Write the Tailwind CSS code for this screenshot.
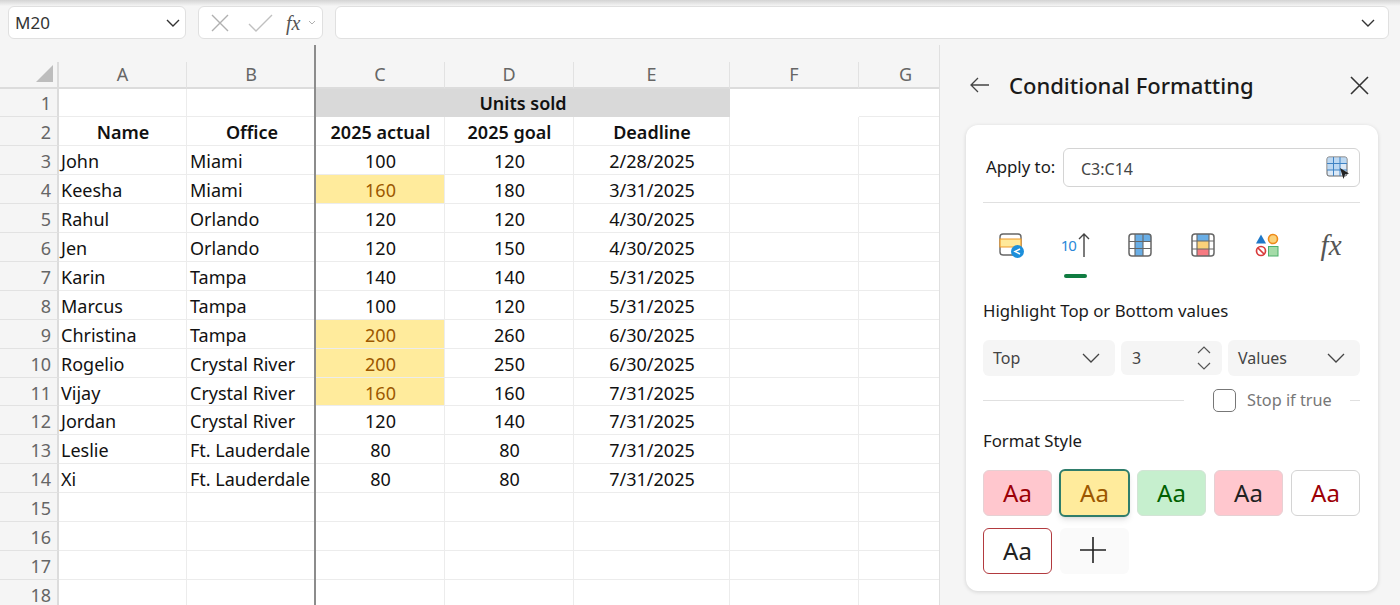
<!DOCTYPE html>
<html lang="en">
<head>
    <meta charset="UTF-8">
    <title>Conditional Formatting</title>
    <script src="https://cdn.jsdelivr.net/npm/@tailwindcss/browser@4"></script>
</head>
<body class="h-[605px] overflow-hidden bg-[#f5f5f5] font-['Noto_Sans',sans-serif] text-[#1a1a1a]">

    <!-- Top shadow -->
    <div class="h-[6px] bg-gradient-to-b from-[#d4d4d4] to-[#f5f5f5]"></div>

    <!-- Formula bar -->
    <div class="flex h-[33px] gap-3 pl-2 pr-[11px]">
        <div class="flex w-[178px] items-center justify-between rounded-md border border-[#e0e0e0] bg-white pl-[6px] pr-[5px] text-[17px] text-[#333]">
            M20
            <svg width="14" height="8" viewBox="0 0 14 8" fill="none" stroke="#333" stroke-width="1.4"><path d="M1 1l6 6 6-6"/></svg>
        </div>
        <div class="flex w-[125px] items-center rounded-md border border-[#e0e0e0] bg-white pl-3">
            <svg width="18" height="18" viewBox="0 0 18 18" fill="none" stroke="#b0b0b0" stroke-width="1.4"><path d="M1 1l16 16M17 1L1 17"/></svg>
            <svg class="ml-[19px]" width="25" height="18" viewBox="0 0 25 18" fill="none" stroke="#c0c0c0" stroke-width="1.4"><path d="M1 10l7 7L24 1"/></svg>
            <span class="ml-[13px] font-['Liberation_Serif',serif] text-[20px] italic leading-none text-[#555]">fx</span>
            <svg class="ml-[8px]" width="8" height="5" viewBox="0 0 8 5" fill="none" stroke="#b0b0b0" stroke-width="1"><path d="M1 1l3 3 3-3"/></svg>
        </div>
        <div class="flex flex-1 items-center justify-end rounded-md border border-[#e0e0e0] bg-white pr-[13px]">
            <svg width="14" height="8" viewBox="0 0 14 8" fill="none" stroke="#333" stroke-width="1.4"><path d="M1 1l6 6 6-6"/></svg>
        </div>
    </div>

    <div class="mt-[6px] flex">
        <!-- Spreadsheet -->
        <div class="relative h-[560px] w-[939px] overflow-hidden pt-[17px]">
            <table class="w-[939px] table-fixed border-separate border-spacing-0 bg-white text-[18px] leading-none text-[#111]">
                <colgroup>
                    <col class="w-[59px]"><col class="w-[128px]"><col class="w-[129px]"><col class="w-[129px]"><col class="w-[129px]"><col class="w-[156px]"><col class="w-[129px]"><col class="w-[80px]">
                </colgroup>
                <thead class="bg-[#f5f5f5] [&_th]:h-[26.5px] [&_th]:border-b-2 [&_th]:border-r [&_th]:border-b-[#dcdcdc] [&_th]:border-r-[#e2e2e2] [&_th]:text-[18px] [&_th]:font-normal [&_th]:text-[#666]">
                    <tr>
                        <th class="border-r-2! border-r-[#dcdcdc]!">
                            <svg class="mb-[2px] ml-[36px]" width="17" height="17" viewBox="0 0 17 17" fill="#bdbdbd"><path d="M17 0v17H0z"/></svg>
                        </th>
                        <th>A</th><th>B</th><th>C</th><th>D</th><th>E</th><th>F</th><th class="border-r-0! pl-[13px]">G</th>
                    </tr>
                </thead>
                <tbody class="[&_td]:h-[28.92px] [&_td]:border-b [&_td]:border-r [&_td]:border-[#ececec] [&_td]:p-0 [&_td]:pl-[2px] [&_td]:pr-[1px] [&_td]:pt-[2px] [&_td:nth-child(3)]:pl-[3px] [&_th]:h-[28.92px] [&_th]:border-b [&_th]:border-r-2 [&_th]:border-b-[#e2e2e2] [&_th]:border-r-[#dcdcdc] [&_th]:bg-[#f5f5f5] [&_th]:pr-[6px] [&_th]:pt-[2px] [&_th]:text-right [&_th]:font-normal [&_th]:text-[#666]">
                    <tr><th>1</th><td></td><td></td><td colspan="3" class="border-[#d9d9d9]! bg-[#d9d9d9] text-center font-semibold">Units sold</td><td class="border-b-white! border-r-white!"></td><td class="border-r-0!"></td></tr>
                    <tr class="text-center font-semibold"><th>2</th><td>Name</td><td>Office</td><td>2025 actual</td><td>2025 goal</td><td>Deadline</td><td></td><td class="border-r-0!"></td></tr>
                    <tr><th>3</th><td>John</td><td>Miami</td><td class="text-center">100</td><td class="text-center">120</td><td class="text-center">2/28/2025</td><td></td><td class="border-r-0!"></td></tr>
                    <tr><th>4</th><td>Keesha</td><td>Miami</td><td class="bg-[#ffeb9c] text-center text-[#9c5700]">160</td><td class="text-center">180</td><td class="text-center">3/31/2025</td><td></td><td class="border-r-0!"></td></tr>
                    <tr><th>5</th><td>Rahul</td><td>Orlando</td><td class="text-center">120</td><td class="text-center">120</td><td class="text-center">4/30/2025</td><td></td><td class="border-r-0!"></td></tr>
                    <tr><th>6</th><td>Jen</td><td>Orlando</td><td class="text-center">120</td><td class="text-center">150</td><td class="text-center">4/30/2025</td><td></td><td class="border-r-0!"></td></tr>
                    <tr><th>7</th><td>Karin</td><td>Tampa</td><td class="text-center">140</td><td class="text-center">140</td><td class="text-center">5/31/2025</td><td></td><td class="border-r-0!"></td></tr>
                    <tr><th>8</th><td>Marcus</td><td>Tampa</td><td class="text-center">100</td><td class="text-center">120</td><td class="text-center">5/31/2025</td><td></td><td class="border-r-0!"></td></tr>
                    <tr><th>9</th><td>Christina</td><td>Tampa</td><td class="bg-[#ffeb9c] text-center text-[#9c5700]">200</td><td class="text-center">260</td><td class="text-center">6/30/2025</td><td></td><td class="border-r-0!"></td></tr>
                    <tr><th>10</th><td>Rogelio</td><td>Crystal River</td><td class="bg-[#ffeb9c] text-center text-[#9c5700]">200</td><td class="text-center">250</td><td class="text-center">6/30/2025</td><td></td><td class="border-r-0!"></td></tr>
                    <tr><th>11</th><td>Vijay</td><td>Crystal River</td><td class="bg-[#ffeb9c] text-center text-[#9c5700]">160</td><td class="text-center">160</td><td class="text-center">7/31/2025</td><td></td><td class="border-r-0!"></td></tr>
                    <tr><th>12</th><td>Jordan</td><td>Crystal River</td><td class="text-center">120</td><td class="text-center">140</td><td class="text-center">7/31/2025</td><td></td><td class="border-r-0!"></td></tr>
                    <tr><th>13</th><td>Leslie</td><td>Ft. Lauderdale</td><td class="text-center">80</td><td class="text-center">80</td><td class="text-center">7/31/2025</td><td></td><td class="border-r-0!"></td></tr>
                    <tr><th>14</th><td>Xi</td><td>Ft. Lauderdale</td><td class="text-center">80</td><td class="text-center">80</td><td class="text-center">7/31/2025</td><td></td><td class="border-r-0!"></td></tr>
                    <tr><th>15</th><td></td><td></td><td></td><td></td><td></td><td></td><td class="border-r-0!"></td></tr>
                    <tr><th>16</th><td></td><td></td><td></td><td></td><td></td><td></td><td class="border-r-0!"></td></tr>
                    <tr><th>17</th><td></td><td></td><td></td><td></td><td></td><td></td><td class="border-r-0!"></td></tr>
                    <tr><th>18</th><td></td><td></td><td></td><td></td><td></td><td></td><td class="border-r-0!"></td></tr>
                </tbody>
            </table>
            <!-- Freeze pane line -->
            <div class="absolute bottom-0 left-[314px] top-0 w-[2px] bg-[#8c8c8c]"></div>
        </div>

        <!-- Side panel -->
        <aside class="w-[461px] border-l border-[#e0e0e0] pt-5">
            <div class="flex h-10 items-center pl-[30px] pr-[31px]">
                <svg width="19" height="16" viewBox="0 0 19 16" fill="none" stroke="#444" stroke-width="1.3"><path d="M19 8H1M8 1L1 8l7 7"/></svg>
                <h1 class="ml-[20px] flex-1 text-[22px] font-medium text-[#1a1a1a]">Conditional Formatting</h1>
                <svg width="19" height="19" viewBox="0 0 19 19" fill="none" stroke="#333" stroke-width="1.6"><path d="M1 1l17 17M18 1L1 18"/></svg>
            </div>

            <div class="ml-[26px] mt-5 w-[412px] rounded-xl bg-white pb-[17px] pl-[17px] pr-[18px] pt-[23px] shadow-[0_1px_4px_rgba(0,0,0,0.14)]">
                <div class="flex items-center">
                    <label class="mb-[2px] ml-[3px] w-[77px] text-[16.8px]">Apply to:</label>
                    <div class="flex h-[39px] flex-1 items-center justify-between rounded-md border border-[#d4d4d4] pl-[17px] pr-[9px] text-[16px] text-[#444]">
                        <span class="mt-[2px]">C3:C14</span>
                        <svg width="24" height="24" viewBox="0 0 24 24" fill="none">
                            <rect x="1" y="1" width="20" height="19" rx="2" fill="#dbe9f7" stroke="#666"/>
                            <path d="M1.5 1.5h19v6h-19zM1.5 7.5h12.5v6.5H1.5z" fill="#bcd8f2"/>
                            <path d="M1 7.5h20M1 14h20M7.5 1v19M14 1v19" stroke="#3f83c4"/>
                            <path d="M14 12l9 5.5-4 1-1.5 4.5z" fill="#222"/>
                        </svg>
                    </div>
                </div>
                <div class="mt-[15px] h-px bg-[#e0e0e0]"></div>

                <!-- Rule type icons -->
                <div class="-mx-[3px] mt-[30px] grid grid-cols-6 justify-items-center">
                    <svg width="26" height="25" viewBox="0 0 26 25" fill="none">
                        <rect x="1" y="1" width="21" height="21" rx="3" fill="#fff" stroke="#666" stroke-width="1.4"/>
                        <path d="M1 6h21v8H1z" fill="#ffe99a" stroke="#ee9a2a" stroke-width="1.2"/>
                        <circle cx="18.5" cy="18.5" r="6.5" fill="#1c8fdb"/>
                        <path d="M21 16l-5 2.5 5 2.5" stroke="#fff" stroke-width="1.5"/>
                    </svg>
                    <div class="flex h-[25px] items-center">
                        <span class="text-[15px] leading-none tracking-[-1px] text-[#2b88d8]">10</span>
                        <svg class="ml-[1px]" width="14" height="25" viewBox="0 0 14 25" fill="none" stroke="#444" stroke-width="1.4"><path d="M7 24V1M2 6l5-5 5 5"/></svg>
                    </div>
                    <svg width="24" height="25" viewBox="0 0 24 25" fill="none">
                        <path d="M7 1h16v8h-8v14H7z" fill="#69aee6"/>
                        <rect x="1" y="1" width="22" height="22" rx="3" stroke="#666" stroke-width="1.5"/>
                        <path d="M1 8.5h22M1 15.5h22M7 1v22M15 1v22" stroke="#666" stroke-width="1.1"/>
                    </svg>
                    <svg width="24" height="25" viewBox="0 0 24 25" fill="none">
                        <path d="M6 1h12v7H6z" fill="#69aee6"/><path d="M6 8h12v8H6z" fill="#fbd27a"/><path d="M6 16h12v7H6z" fill="#f77b82"/>
                        <rect x="1" y="1" width="22" height="22" rx="3" stroke="#666" stroke-width="1.5"/>
                        <path d="M1 8h22M1 16h22M6 1v22M18 1v22" stroke="#666" stroke-width="1.1"/>
                    </svg>
                    <svg width="24" height="25" viewBox="0 0 24 25" fill="none">
                        <path d="M6 1.5l5 9H1z" fill="#1f78c8"/>
                        <circle cx="18" cy="6" r="4.5" fill="#fbd27a" stroke="#ee8a1a" stroke-width="1.6"/>
                        <circle cx="6" cy="18" r="4.5" stroke="#d83b3b" stroke-width="1.7"/>
                        <path d="M3 15l6 6" stroke="#d83b3b" stroke-width="1.7"/>
                        <rect x="13.5" y="13.5" width="9.5" height="9.5" fill="#a4dba8" stroke="#4caf6a"/>
                    </svg>
                    <span class="flex h-[25px] items-center font-['Liberation_Serif',serif] text-[29px] italic leading-none text-[#555]">fx</span>
                </div>
                <div class="ml-[81px] mt-[16px] h-1 w-[23px] rounded-full bg-[#107c41]"></div>

                <h2 class="mt-[23px] text-[16.8px] leading-5">Highlight Top or Bottom values</h2>
                <div class="mt-[19px] flex items-center gap-[6px] text-[16px] text-[#444]">
                    <div class="flex h-9 w-[132px] items-center justify-between rounded-md bg-[#f5f5f5] pl-[10px] pr-[15px]">
                        Top
                        <svg width="18" height="10" viewBox="0 0 18 10" fill="none" stroke="#444" stroke-width="1.3"><path d="M1 1l8 8 8-8"/></svg>
                    </div>
                    <div class="flex h-[34px] w-[101px] items-center justify-between rounded-md bg-[#f5f5f5] pl-[11px] pr-[11px]">
                        3
                        <svg width="14" height="26" viewBox="0 0 14 26" fill="none" stroke="#555" stroke-width="1.2"><path d="M1 8l6-6 6 6M1 18l6 6 6-6"/></svg>
                    </div>
                    <div class="flex h-9 w-[132px] items-center justify-between rounded-md bg-[#f5f5f5] pl-[10px] pr-[15px]">
                        Values
                        <svg width="18" height="10" viewBox="0 0 18 10" fill="none" stroke="#444" stroke-width="1.3"><path d="M1 1l8 8 8-8"/></svg>
                    </div>
                </div>
                <div class="mt-[13px] flex h-[22px] items-center text-[16.3px] text-[#777]">
                    <div class="h-px w-[201px] bg-[#e0e0e0]"></div>
                    <div class="ml-[29px] h-[23px] w-[23px] rounded-[5px] border border-[#777]"></div>
                    <span class="ml-[11px] w-[85px]">Stop if true</span>
                    <div class="ml-[18px] h-px flex-1 bg-[#e0e0e0]"></div>
                </div>

                <h2 class="mt-[20px] text-[16.8px] leading-5">Format Style</h2>
                <div class="mt-[19px] grid grid-cols-[repeat(5,69px)] gap-x-2 gap-y-3 text-[24px] leading-none">
                    <div class="flex h-[46px] items-center justify-center rounded-md border border-[#e6d0d3] bg-[#ffc7ce] text-[#9c0006]">Aa</div>
                    <div class="-mx-px -my-px flex h-[48px] items-center justify-center rounded-md border-2 border-[#2f7d6b] bg-[#ffeb9c] text-[#9c5700] shadow-md">Aa</div>
                    <div class="flex h-[46px] items-center justify-center rounded-md border border-[#d2e4d5] bg-[#c6efce] text-[#006100]">Aa</div>
                    <div class="flex h-[46px] items-center justify-center rounded-md border border-[#e6d0d3] bg-[#ffc7ce] text-[#222]">Aa</div>
                    <div class="flex h-[46px] items-center justify-center rounded-md border-[1.5px] border-[#d4d4d4] bg-white text-[#9c0006]">Aa</div>
                    <div class="flex h-[46px] items-center justify-center rounded-md border-[1.5px] border-[#b23a3f] bg-white text-[#222]">Aa</div>
                    <div class="flex h-[46px] items-center justify-center rounded-md bg-[#fafafa] pb-[2px] pr-[3px]">
                        <svg width="28" height="28" viewBox="0 0 28 28" fill="none" stroke="#222" stroke-width="1.6"><path d="M14 1v26M1 14h26"/></svg>
                    </div>
                </div>
            </div>
        </aside>
    </div>
</body>
</html>
